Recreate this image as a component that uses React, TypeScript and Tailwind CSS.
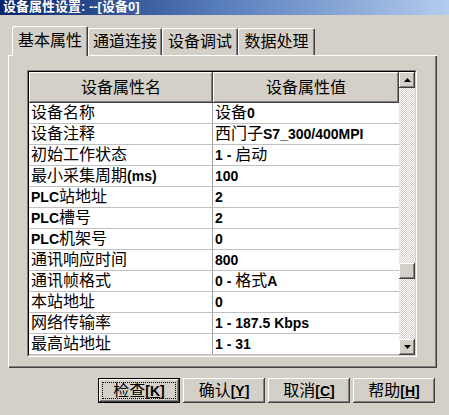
import React from 'react'

const rows: [string, string][] = [
  ['设备名称', '设备0'],
  ['设备注释', '西门子S7_300/400MPI'],
  ['初始工作状态', '1 - 启动'],
  ['最小采集周期(ms)', '100'],
  ['PLC站地址', '2'],
  ['PLC槽号', '2'],
  ['PLC机架号', '0'],
  ['通讯响应时间', '800'],
  ['通讯帧格式', '0 - 格式A'],
  ['本站地址', '0'],
  ['网络传输率', '1 - 187.5 Kbps'],
  ['最高站地址', '1 - 31'],
]

const tabs = [
  { label: '基本属性', w: 'w-[76px]' },
  { label: '通道连接', w: 'w-[74px]' },
  { label: '设备调试', w: 'w-[76px]' },
  { label: '数据处理', w: 'w-[77px]' },
]

const raised =
  'shadow-[inset_-1px_-1px_#404040,inset_1px_1px_#ffffff,inset_-2px_-2px_#808080,inset_2px_2px_#d4d0c8]'

// ascii runs in bold sans, chinese in regular
function Mixed({ text }: { text: string }) {
  const parts = text.match(/[\x00-\x7f]+|[^\x00-\x7f]+/g) || []
  return (
    <>
      {parts.map((p, i) =>
        /^[\x00-\x7f]+$/.test(p) ? (
          <span key={i} className="whitespace-pre text-[14px] font-bold">
            {p}
          </span>
        ) : (
          <span key={i}>{p}</span>
        )
      )}
    </>
  )
}

function Button({ label, hot, focused }: { label: string; hot: string; focused?: boolean }) {
  return (
    <div
      className={`flex h-[25px] w-[82px] p-[3px] ${focused ? 'border border-black' : ''} ${raised}`}
    >
      <div
        className={`flex flex-1 items-center justify-center leading-[16px] ${
          focused ? 'border border-dotted border-black' : ''
        }`}
      >
        <span className="text-[16px]">{label}</span>
        <span className="text-[14px] font-bold">
          [<span className="underline">{hot}</span>]
        </span>
      </div>
    </div>
  )
}

export default function App() {
  return (
    <div className="flex h-[415px] w-[449px] flex-col overflow-hidden bg-[#d4d0c8] font-['Liberation_Sans','Noto_Sans_CJK_SC',sans-serif] text-black">
      <div className="h-[15px] shrink-0 bg-gradient-to-r from-[#0a246a] via-[#5a7fbd] to-[#b4cced] pl-[3px] text-[13px] font-bold leading-[14px] text-white">
        设备属性设置: --[设备0]
      </div>

      <div className="pl-[8px] pr-[12px] pt-[11px]">
        {/* tabs */}
        <div className="flex h-[29px] items-end pl-[4px]">
          {tabs.map((t, i) =>
            i === 0 ? (
              <div
                key={t.label}
                className={`relative z-10 -mb-px flex h-[30px] ${t.w} items-center justify-center rounded-t-[2px] bg-[#d4d0c8] text-[16px] leading-none shadow-[inset_1px_1px_#ffffff,inset_-1px_0_#404040,inset_-2px_0_#808080]`}
              >
                {t.label}
              </div>
            ) : (
              <div
                key={t.label}
                className={`flex h-[27px] ${t.w} items-center justify-center rounded-t-[2px] pt-px text-[16px] leading-none shadow-[inset_1px_1px_#ffffff,inset_-1px_0_#404040,inset_-2px_0_#808080]`}
              >
                {t.label}
              </div>
            )
          )}
        </div>

        {/* panel */}
        <div className="h-[313px] pl-[19px] pt-[15px] shadow-[inset_1px_1px_#ffffff,inset_-1px_-1px_#404040,inset_-2px_-2px_#808080]">
          <div className="w-[390px] border border-[#808080] border-b-white border-r-white">
            <div className="flex border border-black border-b-[#d4d0c8] border-r-[#d4d0c8]">
              {/* table */}
              <div className="w-[370px] bg-white">
                <div className="flex h-[31px] text-[16px]">
                  <div className={`flex w-[184px] items-center justify-center bg-[#d4d0c8] ${raised}`}>
                    设备属性名
                  </div>
                  <div className={`flex flex-1 items-center justify-center bg-[#d4d0c8] ${raised}`}>
                    设备属性值
                  </div>
                </div>
                {rows.map(([k, v]) => (
                  <div key={k} className="flex h-[21px] border-b border-[#c0c0c0] text-[16px] leading-none">
                    <div className="flex w-[184px] items-center border-r border-[#a0a0a0] pl-[2px]">
                      <Mixed text={k} />
                    </div>
                    <div className="flex flex-1 items-center pl-[2px]">
                      <Mixed text={v} />
                    </div>
                  </div>
                ))}
              </div>

              {/* scrollbar */}
              <div className="flex w-[16px] flex-col">
                <div className={`flex h-[16px] items-center justify-center bg-[#d4d0c8] ${raised}`}>
                  <svg width="7" height="4" viewBox="0 0 7 4">
                    <path d="M3.5 0 L7 4 L0 4 Z" fill="#000" />
                  </svg>
                </div>
                <div className="flex flex-1 flex-col bg-[repeating-conic-gradient(#ffffff_0_25%,#d4d0c8_0_50%)] bg-[length:2px_2px]">
                  <div className={`mt-[175px] h-[16px] bg-[#d4d0c8] ${raised}`} />
                </div>
                <div className={`flex h-[16px] items-center justify-center bg-[#d4d0c8] ${raised}`}>
                  <svg width="7" height="4" viewBox="0 0 7 4">
                    <path d="M0 0 L7 0 L3.5 4 Z" fill="#000" />
                  </svg>
                </div>
              </div>
            </div>
          </div>
        </div>
      </div>

      {/* buttons */}
      <div className="mt-[10px] flex justify-end gap-[3px] pr-[14px]">
        <Button label="检查" hot="K" focused />
        <Button label="确认" hot="Y" />
        <Button label="取消" hot="C" />
        <Button label="帮助" hot="H" />
      </div>
    </div>
  )
}
